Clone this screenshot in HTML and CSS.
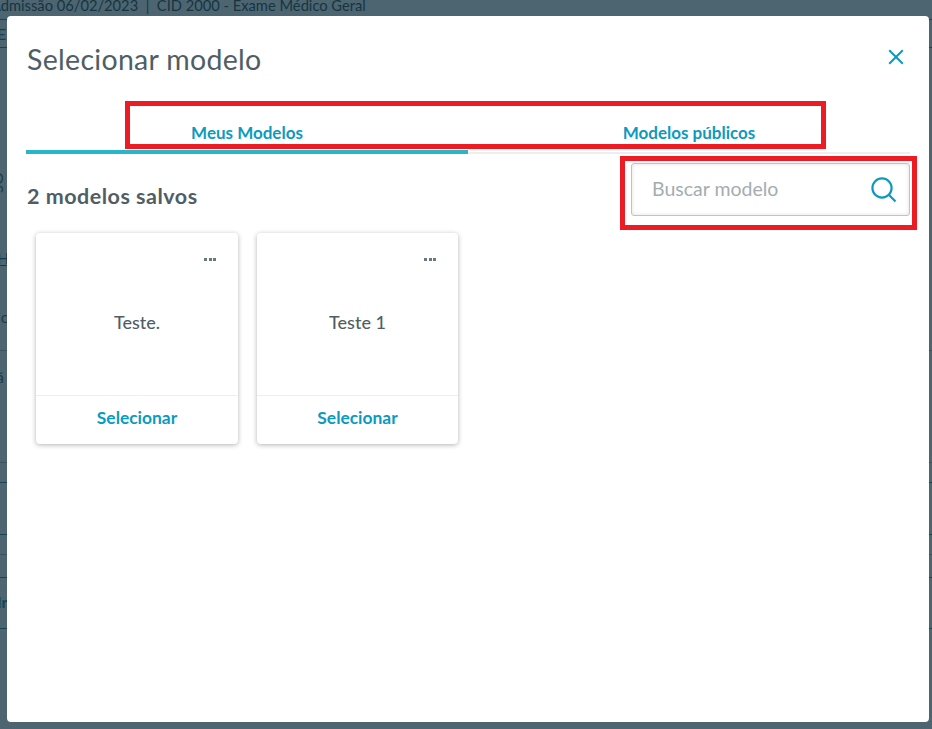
FILE: index.html
```html
<!DOCTYPE html>
<html lang="pt-BR">
<head>
<meta charset="utf-8">
<title>Selecionar modelo</title>
<link rel="stylesheet" href="styles.css">
</head>
<body>
<div class="page">
  <div class="bg-head">Admissão 06/02/2023 &nbsp;|&nbsp; CID 2000 - Exame Médico Geral</div>
  <div class="bg-row bg-h28 teal"><span class="bg-txt">EN</span></div>
  <div class="bg-row bg-h303 gray">
    <span class="bg-txt bg-vert">OS</span>
    <span class="bg-txt bg-link">H</span>
    <span class="bg-txt bg-ic">ic</span>
  </div>
  <div class="bg-row bg-h112 gray"><span class="bg-txt bg-a">ã</span></div>
  <div class="bg-row bg-h20 teal"></div>
  <div class="bg-row bg-h52 teal"></div>
  <div class="bg-row bg-h20 gray"></div>
  <div class="bg-row bg-h23 teal"></div>
  <div class="bg-row bg-h51 teal"><span class="bg-txt bg-strong">Ir</span></div>
</div>

<div class="overlay">
  <section class="modal">
    <header class="modal-head">
      <h1 class="modal-title">Selecionar modelo</h1>
      <button class="close" aria-label="Fechar">
        <svg width="18" height="18" viewBox="0 0 18 18"><path d="M2.2 2.2 15.8 15.8M15.8 2.2 2.2 15.8" fill="none" stroke="#0c9abe" stroke-width="2"/></svg>
      </button>
    </header>

    <nav class="tabs">
      <a class="tab active">Meus Modelos</a>
      <a class="tab">Modelos públicos</a>
    </nav>

    <div class="toolbar">
      <h2 class="count">2 modelos salvos</h2>
      <label class="search">
        <span class="search-ph">Buscar modelo</span>
        <svg width="28" height="28" viewBox="0 0 28 28"><circle cx="12" cy="12" r="9.6" fill="none" stroke="#0c9abe" stroke-width="2.2"/><path d="M18.8 18.8 25.5 25.5" fill="none" stroke="#0c9abe" stroke-width="2.2"/></svg>
      </label>
    </div>

    <div class="cards">
      <article class="card">
        <div class="card-body">
          <span class="dots"><i></i><i></i><i></i></span>
          <span class="card-name">Teste.</span>
        </div>
        <a class="card-action">Selecionar</a>
      </article>
      <article class="card card-narrow">
        <div class="card-body">
          <span class="dots"><i></i><i></i><i></i></span>
          <span class="card-name">Teste 1</span>
        </div>
        <a class="card-action">Selecionar</a>
      </article>
    </div>
  </section>
  <div class="mark mark-tabs"></div>
  <div class="mark mark-search"></div>
</div>
</body>
</html>
```

FILE: styles.css
```css
* { box-sizing: border-box; }
html, body { margin: 0; height: 100%; overflow: hidden; }
body { font-family: Lato, "Noto Sans", sans-serif; color: #4f5e65; background: #fff; }

.page { height: 729px; overflow: hidden; background: #fff; }
.bg-head { height: 20px; margin-left: -9px; font-size: 14.7px; line-height: 10px; white-space: nowrap; color: #0b1b28; border-bottom: 1px solid #0b6e80; }
.bg-row { display: flex; flex-direction: column; border-bottom: 1px solid #999; }
.bg-row.teal { border-bottom-color: #0b6e80; }
.bg-row.gray { border-bottom-color: #a9a9a9; }
.bg-h28 { height: 28px; padding-top: 4px; }
.bg-h303 { height: 303px; padding-top: 124px; }
.bg-h112 { height: 112px; padding-top: 16px; }
.bg-h20 { height: 20px; }
.bg-h52 { height: 52px; }
.bg-h23 { height: 23px; }
.bg-h51 { height: 51px; padding-top: 14px; }
.bg-txt { font-size: 16px; line-height: 20px; color: #38474e; margin-left: -3px; }
.bg-vert { writing-mode: vertical-rl; width: 12px; height: 30px; margin-left: -4px; }
.bg-link { margin-top: 46px; color: #0b3a66; text-decoration: underline; }
.bg-ic { margin-top: 39px; }
.bg-a { margin-left: -4px; }
.bg-strong { color: #0b6e90; font-weight: 700; }

.overlay { position: fixed; inset: 0; background: rgba(26, 58, 72, .78); }
.modal { position: absolute; left: 7px; top: 16px; width: 922px; height: 706px; padding: 0 19px; background: #fff; border-radius: 4px; }

.modal-head { display: flex; justify-content: space-between; align-items: flex-start; height: 86px; }
.modal-title { margin: 0; padding-left: 1px; font-size: 28.5px; letter-spacing: .3px; font-weight: 400; line-height: 86px; height: 86px; color: #4f5e65; }
.close { border: 0; padding: 0; background: none; display: flex; margin: 32px 5px 0 0; }

.tabs { display: grid; grid-template-columns: 442px 442px; height: 52px; }
.tab { display: flex; align-items: flex-end; justify-content: center; padding-bottom: 9px; font-size: 17px; line-height: 20px; font-weight: 700; color: #0c9abe; border-bottom: 2px solid #eee; }
.tab.active { border-bottom: 4px solid #29b6c8; padding-bottom: 7px; }

.toolbar { display: flex; justify-content: space-between; align-items: flex-start; padding-top: 9px; }
.count { margin: 0; padding: 20px 0 0 1px; font-size: 21.5px; letter-spacing: .5px; line-height: 26px; font-weight: 700; color: #4f5e65; }
.search { display: flex; align-items: center; justify-content: space-between; width: 279px; height: 53px; padding: 0 11px 0 20px; border: 1px solid #bfc3c4; border-radius: 3px; background: #fff; box-shadow: inset 0 0 4px rgba(0,0,0,.12); }
.search-ph { padding-bottom: 2px; font-size: 19.5px; color: #a3adb0; }

.cards { display: flex; gap: 19px; padding: 17px 0 0 10px; }
.card { display: flex; flex-direction: column; width: 202px; height: 211px; background: #fff; border-radius: 4px; box-shadow: 0 1px 5px rgba(0,0,0,.3); }
.card-narrow { width: 201px; }
.card-body { position: relative; flex: 1; display: flex; align-items: center; justify-content: center; padding-top: 16px; border-bottom: 1px solid #eee; }
.card-name { font-size: 18px; font-weight: 500; color: #4f5e65; }
.dots { position: absolute; top: 25px; right: 22px; display: flex; gap: 1.5px; }
.dots i { width: 3px; height: 3px; background: #6a777d; }
.card-action { display: flex; align-items: center; justify-content: center; height: 48px; padding-bottom: 6px; font-size: 17.4px; font-weight: 700; color: #0c9abe; }

.mark { position: absolute; border: 5px solid #ed1c24; }
.mark-tabs { left: 125px; top: 101px; width: 701px; height: 48px; }
.mark-search { left: 620px; top: 156px; width: 297px; height: 74px; }
```
